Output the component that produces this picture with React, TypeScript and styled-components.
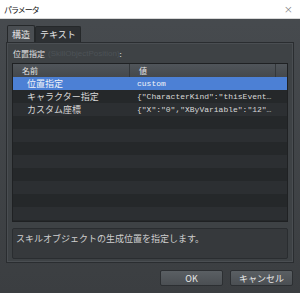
import React from 'react'
import styled, { createGlobalStyle } from 'styled-components'

const Global = createGlobalStyle`
  html, body {
    margin: 0;
    padding: 0;
    background: #43474a;
  }
  body {
    font-family: "Noto Sans CJK JP", "Noto Sans", sans-serif;
  }
`;

const Window = styled.div`
  width: 300px;
  height: 293px;
  display: flex;
  flex-direction: column;
  background: linear-gradient(#474b4f, #3b3e41);
  overflow: hidden;
`;
const TitleBar = styled.div`
  height: 18px;
  flex: none;
  display: flex;
  align-items: center;
  justify-content: space-between;
  padding: 0 7px 0 4px;
  background: #ffffff;
  border-bottom: 1px solid #d8d8d8;
  font-size: 8px;
  letter-spacing: -1px;
  color: #111;
`;
const Close = styled.span`
  font-family: "DejaVu Sans", sans-serif;
  font-size: 11px;
  font-weight: 300;
  color: #777;
  letter-spacing: 0;
`;
const Body = styled.div`
  flex: 1;
  display: flex;
  flex-direction: column;
  padding: 6px 6px 0 6px;
`;
const Tabs = styled.div`
  display: flex;
  height: 17px;
  margin-left: 1px;
`;
const Tab = styled.div<{ $active?: boolean }>`
  display: flex;
  align-items: center;
  justify-content: center;
  padding: 0 4px;
  font-size: 9px;
  color: #e6e6e6;
  background: ${p => (p.$active ? '#4a4e52' : '#2d3033')};
  border: 1px solid #25282a;
  border-bottom: none;
  border-radius: 2px 2px 0 0;
  margin-top: ${p => (p.$active ? '0' : '1px')};
  position: relative;
  z-index: ${p => (p.$active ? 1 : 0)};
`;
const Panel = styled.div`
  height: 219px;
  display: flex;
  flex-direction: column;
  border: 1px solid #2a2d30;
  box-shadow: inset 0 0 0 1px #4a4e52;
  background: #3e4245;
  padding: 0 5px;
`;
const Label = styled.div`
  height: 20px;
  display: flex;
  align-items: center;
  font-size: 8px;
  color: #e0e0e0;
  padding-left: 1px;
  span {
    color: #4d5257;
    font-family: "Liberation Sans", sans-serif;
    margin-left: 3px;
  }
`;
const Grid = styled.div`
  height: 157px;
  display: flex;
  flex-direction: column;
  border: 1px solid #1f2123;
  background: #25282a;
  overflow: hidden;
`;
const Header = styled.div`
  display: grid;
  grid-template-columns: 117px 146px 1fr;
  height: 13px;
  flex: none;
  background: linear-gradient(#50555a, #44484c);
  font-size: 8px;
  color: #e4e4e4;
`;
const HeadCell = styled.div`
  display: flex;
  align-items: center;
  padding-left: 9px;
  border-right: 1px solid #33373a;
  &:last-child {
    border-right: none;
  }
`;
const Row = styled.div<{ $selected?: boolean; $odd?: boolean }>`
  display: grid;
  grid-template-columns: 117px 1fr;
  height: 13px;
  flex: none;
  background: ${p => (p.$selected ? '#4c80d5' : p.$odd ? '#25282a' : '#2c2f32')};
  color: ${p => (p.$selected ? '#f2f4f8' : '#d8d8d8')};
`;
const NameCell = styled.div`
  display: flex;
  align-items: center;
  padding-left: 14px;
  font-size: 9px;
  white-space: nowrap;
  overflow: hidden;
`;
const ValueCell = styled.div`
  display: flex;
  align-items: center;
  padding-left: 7px;
  font-family: "Liberation Mono", "Noto Sans CJK JP", monospace;
  font-size: 8px;
  white-space: nowrap;
  overflow: hidden;
`;
const Description = styled.div`
  margin-top: 6px;
  height: 31px;
  border: 1px solid #2a2d30;
  border-radius: 2px;
  background: #36393c;
  padding: 3px 3px;
  box-sizing: border-box;
  font-size: 9px;
  color: #cfcfcf;
`;
const Footer = styled.div`
  display: flex;
  justify-content: flex-end;
  gap: 7px;
  padding: 7px 1px 0 0;
`;
const Button = styled.div`
  width: 63px;
  height: 16px;
  display: flex;
  align-items: center;
  justify-content: center;
  background: linear-gradient(#5a5f63, #4b4f53);
  border: 1px solid #2c2f32;
  border-radius: 2px;
  box-sizing: border-box;
  font-size: 9px;
  color: #e8e8e8;
`;

const rows = [
  { name: '位置指定', value: 'custom' },
  { name: 'キャラクター指定', value: '{"CharacterKind":"thisEvent…' },
  { name: 'カスタム座標', value: '{"X":"0","XByVariable":"12"…' },
  ...Array.from({ length: 8 }, () => ({ name: '', value: '' })),
];

const App = () => {
  return (
    <Window>
      <Global />
      <TitleBar>
        <span>パラメータ</span>
        <Close>×</Close>
      </TitleBar>
      <Body>
        <Tabs>
          <Tab $active>構造</Tab>
          <Tab>テキスト</Tab>
        </Tabs>
        <Panel>
          <Label>
            位置指定<span>(SkillObjectPosition)</span>:
          </Label>
          <Grid>
            <Header>
              <HeadCell>名前</HeadCell>
              <HeadCell>値</HeadCell>
              <HeadCell />
            </Header>
            {rows.map((r, i) => (
              <Row key={i} $selected={i === 0} $odd={i % 2 === 1}>
                <NameCell>{r.name}</NameCell>
                <ValueCell>{r.value}</ValueCell>
              </Row>
            ))}
          </Grid>
          <Description>スキルオブジェクトの生成位置を指定します。</Description>
        </Panel>
        <Footer>
          <Button>OK</Button>
          <Button>キャンセル</Button>
        </Footer>
      </Body>
    </Window>
  )
}

export default App
